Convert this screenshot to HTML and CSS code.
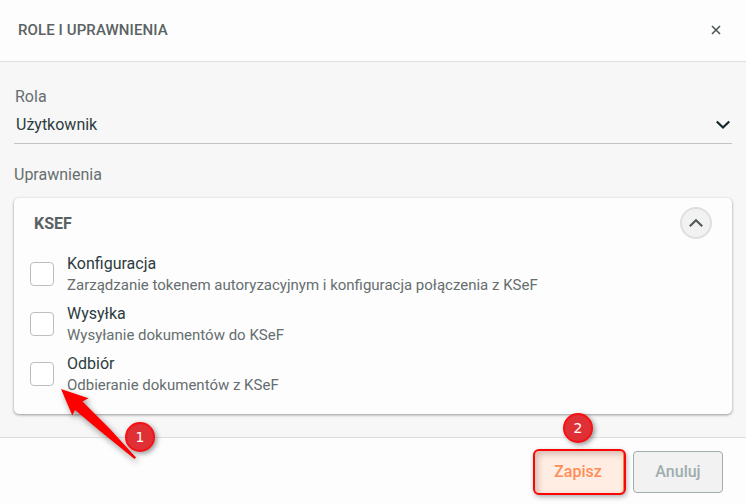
FILE: index.html
```html
<!DOCTYPE html>
<html lang="pl">
<head>
  <meta charset="UTF-8">
  <title>Role i uprawnienia</title>
  <link rel="stylesheet" href="styles.css">
</head>
<body>
  <div class="modal">
    <div class="modal-header">
      <h1>ROLE I UPRAWNIENIA</h1>
      <button class="close" aria-label="Zamknij">
        <svg width="10" height="10" viewBox="0 0 10 10"><path d="M1 1l8 8M9 1l-8 8"/></svg>
      </button>
    </div>

    <div class="modal-body">
      <div class="label role-label">Rola</div>
      <div class="select">
        <span>Użytkownik</span>
        <svg width="16" height="10" viewBox="0 0 16 10"><path d="M1.8 1.5l6.2 6 6.2-6"/></svg>
      </div>
      <div class="label">Uprawnienia</div>

      <div class="card">
        <div class="card-header">
          <h2>KSEF</h2>
          <button class="toggle" aria-label="Zwiń">
            <svg width="16" height="10" viewBox="0 0 16 10"><path d="M1.8 8.2l6.2-6 6.2 6"/></svg>
          </button>
        </div>
        <label class="option">
          <input type="checkbox">
          <span class="option-text">
            <span class="name">Konfiguracja</span>
            <span class="desc">Zarządzanie tokenem autoryzacyjnym i konfiguracja połączenia z KSeF</span>
          </span>
        </label>
        <label class="option">
          <input type="checkbox">
          <span class="option-text">
            <span class="name">Wysyłka</span>
            <span class="desc">Wysyłanie dokumentów do KSeF</span>
          </span>
        </label>
        <label class="option">
          <input type="checkbox">
          <span class="option-text">
            <span class="name">Odbiór</span>
            <span class="desc">Odbieranie dokumentów z KSeF</span>
          </span>
        </label>
      </div>
    </div>

    <div class="modal-footer">
      <button class="btn save">Zapisz</button>
      <button class="btn cancel">Anuluj</button>
    </div>

    <!-- instruction markers -->
    <svg class="arrow" width="90" height="84" viewBox="0 0 90 84">
      <path d="M6 4L33.5 13.2 27.5 16.5 55 44 81 72.5 79.5 74 45 46 20 25 17.3 30.5z"/>
    </svg>
    <div class="marker marker-1">1</div>
    <div class="marker marker-2">2</div>
  </div>
</body>
</html>
```

FILE: styles.css
```css
* {
  box-sizing: border-box;
}
body {
  margin: 0;
  font-family: Roboto, sans-serif;
  font-size: 16px;
  color: #2c3c3f;
  background-color: #f7f7f7;
}
button {
  font-family: inherit;
  padding: 0;
  cursor: pointer;
}
svg {
  display: block;
  fill: none;
}
.modal {
  position: relative;
  display: flex;
  flex-direction: column;
  height: 504px;
  overflow: hidden;
}
.modal-header {
  display: flex;
  align-items: center;
  justify-content: space-between;
  height: 62px;
  padding: 0 25px 2px 18px;
  background-color: #fdfdfd;
  border-bottom: 1px solid #dedede;
}
h1 {
  margin: 0;
  font-size: 15px;
  font-weight: 500;
  letter-spacing: 0.1px;
  color: #5a6263;
}
.close {
  border: none;
  background: none;
}
.close svg {
  stroke: #4d5657;
  stroke-width: 1.6;
}
.modal-body {
  flex: 1;
  padding: 25px 14px 0;
}
.label {
  line-height: 20px;
  color: #666e6f;
}
.role-label {
  padding-left: 1px;
}
.select {
  display: flex;
  align-items: center;
  justify-content: space-between;
  height: 37px;
  margin-bottom: 21px;
  padding: 0 1px 0 2px;
  border-bottom: 1px solid #c4c4c4;
}
.select span {
  padding-bottom: 2px;
}
.select svg {
  stroke: #14272a;
  stroke-width: 2.2;
}
.card {
  height: 216px;
  margin-top: 13px;
  padding-top: 9px;
  background-color: #fdfdfd;
  border-radius: 5px;
  box-shadow: 0 1px 3px rgba(0, 0, 0, 0.4);
}
.card-header {
  display: flex;
  align-items: center;
  justify-content: space-between;
  height: 32px;
  margin-bottom: 14px;
  padding: 0 20px;
}
h2 {
  margin: 0;
  font-size: 16px;
  font-weight: 700;
  color: #5a6162;
}
.toggle {
  display: flex;
  align-items: center;
  justify-content: center;
  width: 32px;
  height: 32px;
  border: 2px solid #dfdfdf;
  border-radius: 50%;
  background-color: #f2f2f2;
}
.toggle svg {
  stroke: #525859;
  stroke-width: 2.1;
}
.option {
  display: flex;
  height: 50px;
  padding-left: 16px;
}
.option input {
  appearance: none;
  width: 24px;
  height: 24px;
  margin: 9px 13px 0 0;
  border: 1px solid #bdbdbd;
  border-radius: 4px;
  background-color: #fff;
}
.name,
.desc {
  display: block;
}
.name {
  line-height: 22px;
}
.desc {
  font-size: 15px;
  line-height: 20px;
  color: #666e6f;
}
.modal-footer {
  display: flex;
  justify-content: flex-end;
  gap: 7px;
  height: 67px;
  padding: 11px 23px 0 0;
  background-color: #fdfdfd;
  border-top: 1px solid #dedede;
}
.btn {
  padding-bottom: 2px;
  font-size: 16px;
  font-weight: 500;
  border-radius: 4px;
}
.save {
  width: 93px;
  height: 46px;
  padding-right: 3px;
  color: #ff8d57;
  background-color: #ffede4;
  border: 2px solid #fb0606;
  border-radius: 6px;
  box-shadow: inset -1px 0 0 #f0884c, inset 3px 3px 6px rgba(90, 40, 20, 0.25), 1px 2px 5px rgba(0, 0, 0, 0.3);
}
.cancel {
  width: 90px;
  height: 42px;
  margin-top: 2px;
  color: #9fadae;
  background-color: #f2f2f2;
  border: 1px solid #9fadaf;
}
.arrow {
  position: absolute;
  left: 55px;
  top: 385px;
  fill: #fe0000;
  filter: drop-shadow(2px 3px 3px rgba(0, 0, 0, 0.4));
}
.marker {
  position: absolute;
  display: flex;
  align-items: center;
  justify-content: center;
  width: 30px;
  height: 30px;
  padding-bottom: 1px;
  font-family: "DejaVu Sans", sans-serif;
  font-size: 14px;
  color: #fff;
  background-color: #df3036;
  border: 2px solid #fa0f14;
  border-radius: 50%;
  box-shadow: 2px 2px 5px rgba(0, 0, 0, 0.4);
}
.marker-1 {
  left: 125px;
  top: 422px;
}
.marker-2 {
  left: 563px;
  top: 413px;
}
```
